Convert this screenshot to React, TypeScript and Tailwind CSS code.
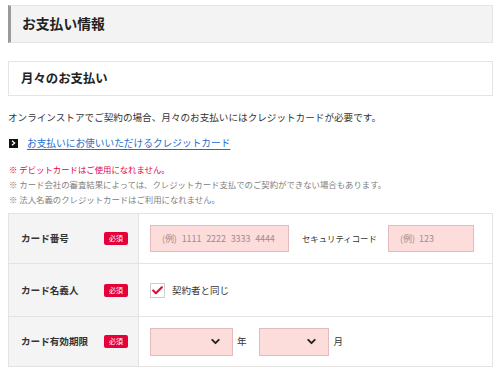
import { ChevronDown, Check } from "lucide-react";

function Required() {
  return (
    <span className="flex h-[13px] w-[24px] items-center justify-center rounded-[2px] bg-[#e60039] text-[7px] leading-none text-white">
      必須
    </span>
  );
}

function Label({ text }: { text: string }) {
  return (
    <div className="flex w-[130px] shrink-0 items-center justify-between border-r border-[#e3e3e3] bg-[#f4f4f4] pl-3 pr-[10px]">
      <span className="text-[9.6px] font-bold text-[#333]">{text}</span>
      <Required />
    </div>
  );
}

function PinkSelect({ width }: { width: string }) {
  return (
    <div className={`flex h-[28px] ${width} items-center justify-end border border-[#e2bcbc] bg-[#fddcdc] pr-[10px]`}>
      <ChevronDown className="h-[13px] w-[13px] text-[#222]" strokeWidth={3.5} />
    </div>
  );
}

export default function App() {
  return (
    <div className="min-h-[371px] bg-white pl-2 pr-[7px] pt-[5px] font-['Noto_Sans_CJK_JP',sans-serif] text-[#333]">
      {/* 見出し */}
      <div className="flex h-[38px] items-center border border-l-[3px] border-[#e4e4e4] border-l-[#9a9a9a] bg-[#f3f3f3] pl-[11px]">
        <h2 className="text-[13.8px] font-bold leading-none text-[#222]">お支払い情報</h2>
      </div>

      <div className="mt-[18px] flex h-[35px] items-center border border-[#e4e4e4] bg-white pl-3">
        <h3 className="text-[12.4px] font-bold leading-none text-[#222]">月々のお支払い</h3>
      </div>

      <p className="mt-[14px] text-[9.6px] leading-[14px] text-[#333]">
        オンラインストアでご契約の場合、月々のお支払いにはクレジットカードが必要です。
      </p>

      <div className="mt-[12px] flex items-center gap-[9px]">
        <span className="ml-[1px] flex h-[9px] w-[9px] items-center justify-center bg-[#111]">
          <svg width="5" height="6" viewBox="0 0 5 6">
            <path d="M1 0.8 L3.6 3 L1 5.2" stroke="white" strokeWidth="1.3" fill="none" />
          </svg>
        </span>
        <a className="text-[9.7px] leading-[14px] text-[#1a6fcf] underline underline-offset-2">
          お支払いにお使いいただけるクレジットカード
        </a>
      </div>

      <div className="mt-[12px] pl-[1px] text-[8.4px] leading-[15px]">
        <p className="text-[#e8004a]">※ デビットカードはご使用になれません。</p>
        <p className="text-[#808080]">※ カード会社の審査結果によっては、クレジットカード支払でのご契約ができない場合もあります。</p>
        <p className="text-[#808080]">※ 法人名義のクレジットカードはご利用になれません。</p>
      </div>

      {/* フォーム */}
      <div className="mt-[6px] border border-[#e3e3e3]">
        <div className="flex h-[50px] border-b border-[#e3e3e3]">
          <Label text="カード番号" />
          <div className="flex items-center pl-[11px]">
            <div className="flex h-[27px] w-[139px] items-center border border-[#e2bcbc] bg-[#fddcdc] pl-[11px] text-[9px] tracking-[-0.1px] [word-spacing:3px] text-[#a08c8c]">
              (例) 1111 2222 3333 4444
            </div>
            <span className="ml-[13px] text-[8.4px] text-[#333]">セキュリティコード</span>
            <div className="ml-[11px] flex h-[27px] w-[86px] items-center border border-[#e2bcbc] bg-[#fddcdc] pl-[11px] text-[9px] [word-spacing:2px] text-[#a08c8c]">
              (例) 123
            </div>
          </div>
        </div>

        <div className="flex h-[53px] border-b border-[#e3e3e3]">
          <Label text="カード名義人" />
          <div className="flex items-center pl-[11px]">
            <span className="flex h-[15px] w-[15px] items-center justify-center border border-[#cfcfcf] bg-white">
              <Check className="h-[13px] w-[13px] text-[#e0103a]" strokeWidth={4} />
            </span>
            <span className="ml-[7px] text-[9.5px] text-[#333]">契約者と同じ</span>
          </div>
        </div>

        <div className="flex h-[49px]">
          <Label text="カード有効期限" />
          <div className="flex items-center pl-[11px]">
            <PinkSelect width="w-[83px]" />
            <span className="ml-[4px] text-[9.5px] text-[#333]">年</span>
            <div className="ml-[12px]">
              <PinkSelect width="w-[70px]" />
            </div>
            <span className="ml-[5px] text-[9.5px] text-[#333]">月</span>
          </div>
        </div>
      </div>
    </div>
  );
}
